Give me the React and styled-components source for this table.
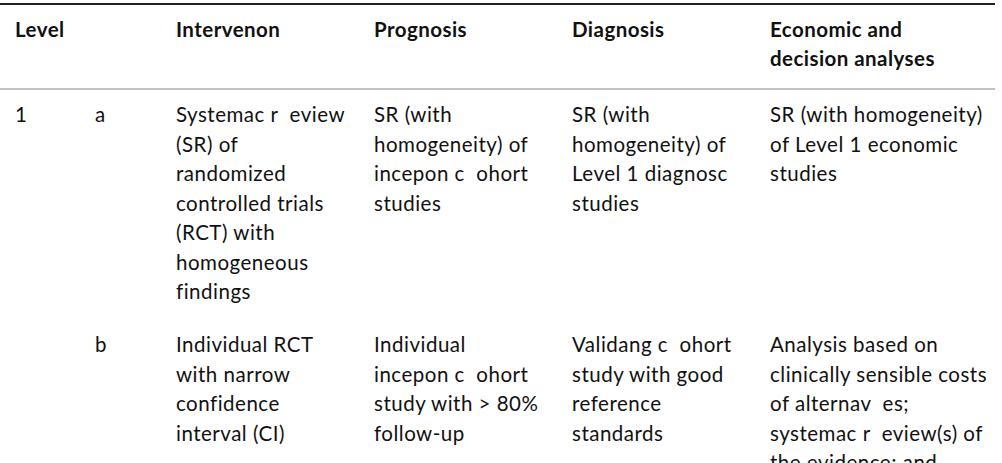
import React from 'react';
import styled, { createGlobalStyle } from 'styled-components';

const GlobalStyle = createGlobalStyle`
    body {
        margin: 0;
        background: #ffffff;
        font-family: Lato, "Open Sans", sans-serif;
        color: #111111;
    }
`;

const columns = '80px 81px 198px 198px 198px 240px';

const header = ['Level', '', 'Intervenon', 'Prognosis', 'Diagnosis', ['Economic and', 'decision analyses']];

const rows = [
    [
        '1',
        'a',
        ['Systemac r  eview', '(SR) of', 'randomized', 'controlled trials', '(RCT) with', 'homogeneous', 'findings'],
        ['SR (with', 'homogeneity) of', 'incepon c  ohort', 'studies'],
        ['SR (with', 'homogeneity) of', 'Level 1 diagnosc', 'studies'],
        ['SR (with homogeneity)', 'of Level 1 economic', 'studies'],
    ],
    [
        '',
        'b',
        ['Individual RCT', 'with narrow', 'confidence', 'interval (CI)'],
        ['Individual', 'incepon c  ohort', 'study with > 80%', 'follow-up'],
        ['Validang c  ohort', 'study with good', 'reference', 'standards'],
        ['Analysis based on', 'clinically sensible costs', 'of alternav  es;', 'systemac r  eview(s) of', 'the evidence; and', 'including multi-way', 'sensitivity analyses'],
    ],
];

const toLines = (cell) => (Array.isArray(cell) ? cell : [cell]);

const App = () => {
    return (
        <Page>
            <GlobalStyle />
            <Table>
                <HeaderRow>
                    {header.map((cell, i) => (
                        <HeadCell key={i}>
                            {toLines(cell).map((line, j) => (
                                <Line key={j}>{line}</Line>
                            ))}
                        </HeadCell>
                    ))}
                </HeaderRow>
                {rows.map((row, r) => (
                    <BodyRow key={r}>
                        {row.map((cell, i) => (
                            <BodyCell key={i}>
                                {toLines(cell).map((line, j) => (
                                    <Line key={j}>{line}</Line>
                                ))}
                            </BodyCell>
                        ))}
                    </BodyRow>
                ))}
            </Table>
        </Page>
    );
};

export default App;

const Page = styled.div`
    padding-top: 3px;
    width: 1002px;
    height: 463px;
    overflow: hidden;
`;

const Table = styled.div`
    width: 995px;
    border-top: 2px solid #222222;
    display: flex;
    flex-direction: column;
`;

const HeaderRow = styled.div`
    display: grid;
    grid-template-columns: ${columns};
    border-bottom: 2px solid #c4c2bf;
`;

const BodyRow = styled.div`
    display: grid;
    grid-template-columns: ${columns};
`;

const HeadCell = styled.div`
    padding: 9.5px 0 14px 15px;
    font-size: 20.5px;
    font-weight: 700;
    line-height: 29.5px;
    letter-spacing: 0.45px;
`;

const BodyCell = styled.div`
    padding: 10.5px 0 13px 15px;
    font-size: 20.5px;
    font-weight: 400;
    line-height: 29.5px;
    letter-spacing: 0.5px;
`;

const Line = styled.div`
    white-space: pre;
`;
